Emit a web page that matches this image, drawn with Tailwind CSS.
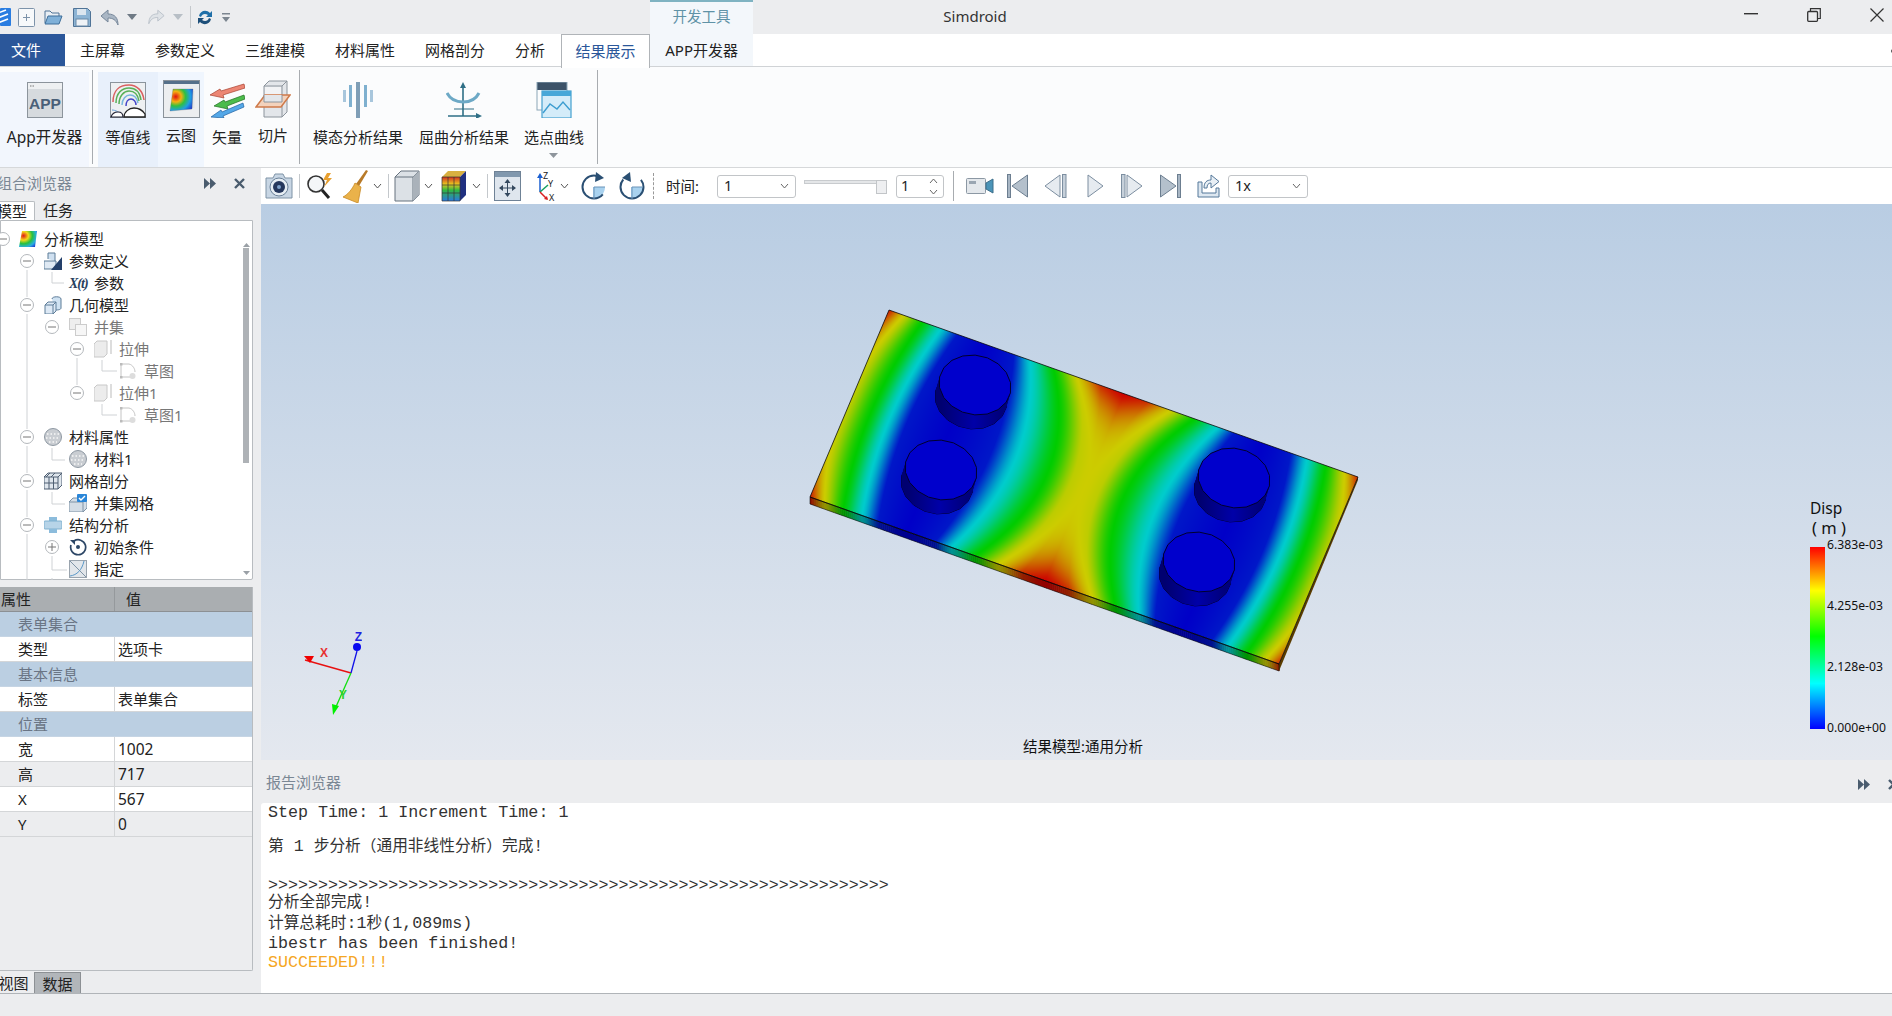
<!DOCTYPE html>
<html lang="zh">
<head>
<meta charset="utf-8">
<title>Simdroid</title>
<script src="https://cdn.jsdelivr.net/npm/@tailwindcss/browser@4"></script>
</head>
<body class="w-[1892px] h-[1016px] overflow-hidden bg-[#ecedef] text-[15px] text-[#222] font-['Noto_Sans','Noto_Sans_CJK_SC',sans-serif]">

<!-- title bar -->
<div class="relative h-[34px] flex items-center bg-[#ecedef]">
  <svg width="11" height="18" viewBox="0 0 11 18"><rect width="11" height="18" rx="1" fill="#2a7de1"/><path d="M-2 5 6 2M-2 10 8 6M-2 15 8 11" stroke="#fff" stroke-width="1.6"/></svg>
  <svg class="ml-[7px]" width="17" height="19" viewBox="0 0 17 19"><rect x=".5" y=".5" width="16" height="18" rx="1" fill="#f7f9fb" stroke="#7d93aa"/><path d="M5 9.5h7M8.5 6v7" stroke="#7d93aa"/></svg>
  <svg class="ml-[9px]" width="19" height="16" viewBox="0 0 19 16"><path d="M1 14V2h5l2 2h7v3" fill="#e8eef4" stroke="#4f7396"/><path d="M1 15 4 7h14l-3 8z" fill="#7fb0d8" stroke="#3f6f9a"/></svg>
  <svg class="ml-[10px]" width="18" height="19" viewBox="0 0 18 19"><path d="M.5.5h14l3 3v15H.5z" fill="#8db4d4" stroke="#4f7396"/><rect x="4" y="1" width="9" height="6" fill="#dce6ef"/><rect x="3" y="11" width="12" height="7" fill="#eef2f6" stroke="#6a8aa8"/></svg>
  <svg class="ml-[9px]" width="20" height="17" viewBox="0 0 20 17"><path d="M8 1 1 7l7 6V9c5 0 8 2 10 7 0-7-3-11-10-11z" fill="#a9b6c4" stroke="#76879a"/></svg>
  <svg class="ml-[7px]" width="10" height="6" viewBox="0 0 10 6"><path d="M0 0h10L5 6z" fill="#6f7a85"/></svg>
  <svg class="ml-[10px]" width="18" height="16" viewBox="0 0 20 17"><path d="M12 1l7 6-7 6V9C7 9 4 11 2 16 2 9 5 5 12 5z" fill="#dfe3e7" stroke="#b8c0c8"/></svg>
  <svg class="ml-[8px]" width="10" height="6" viewBox="0 0 10 6"><path d="M0 0h10L5 6z" fill="#b8bfc6"/></svg>
  <div class="ml-[7px] w-px h-[22px] bg-[#c4c8cc]"></div>
  <svg class="ml-[6px]" width="16" height="19" viewBox="0 0 16 19"><path d="M2 8C3 3 9 1 13 5l2-2v6H9l2-2C8 5 5 6 4 9z" fill="#1f6fa8"/><path d="M14 11c-1 5-7 7-11 3l-2 2v-6h6l-2 2c3 2 6 1 7-2z" fill="#1d4f7a"/></svg>
  <svg class="ml-[9px]" width="8" height="9" viewBox="0 0 8 9"><path d="M0 0h8v1.5H0z M0 4h8L4 9z" fill="#7c8690"/></svg>
  <div class="absolute left-[650px] top-0 w-[103px] h-[34px] pb-[2px] bg-[#f3f7fb] border-t-2 border-[#7fb3c2] flex items-center justify-center text-[#5f92a6] text-[14.5px]">开发工具</div>
  <div class="absolute left-[875px] top-[5px] w-[200px] text-center text-[15px] leading-[22px] text-[#333]">Simdroid</div>
  <svg class="absolute left-[1744px] top-[13px]" width="14" height="2"><rect width="14" height="1.4" fill="#333"/></svg>
  <svg class="absolute left-[1807px] top-[8px]" width="14" height="14" viewBox="0 0 14 14"><path d="M3.5 3V.7h9.8v9.8H11" fill="none" stroke="#333" stroke-width="1.2"/><rect x=".7" y="3.5" width="9.8" height="9.8" rx="1" fill="none" stroke="#333" stroke-width="1.3"/></svg>
  <svg class="absolute left-[1870px] top-[8px]" width="14" height="14" viewBox="0 0 14 14"><path d="M.5.5l13 13M13.5.5l-13 13" stroke="#333" stroke-width="1.2"/></svg>
</div>

<!-- ribbon tabs -->
<div class="relative h-[33px] flex items-center bg-white border-b border-[#d0d3d6] text-[15px]">
  <div class="w-[65px] h-full bg-[#2b579a] text-white flex items-center pl-[11px]">文件</div>
  <div class="px-[15px] whitespace-nowrap">主屏幕</div>
  <div class="px-[15px] whitespace-nowrap">参数定义</div>
  <div class="px-[15px] whitespace-nowrap">三维建模</div>
  <div class="px-[15px] whitespace-nowrap">材料属性</div>
  <div class="px-[15px] whitespace-nowrap">网格剖分</div>
  <div class="px-[15px] whitespace-nowrap">分析</div>
  <div class="ml-[1px] w-[89px] h-[34px] mt-px bg-white border border-b-0 border-[#b0b4b8] text-[#2b579a] flex items-center justify-center">结果展示</div>
  <div class="w-[103px] h-full bg-[#f3f7fb] flex items-center justify-center whitespace-nowrap">APP开发器</div>
  <div class="absolute right-[-3px] top-[15px] w-[4px] h-[4px] rounded-full bg-[#555]"></div>
</div>

<!-- ribbon -->
<div class="h-[101px] flex bg-[#fbfcfd] border-b border-[#d6d8da] text-[15px]">
  <div class="mt-[5px] w-[89px] pt-[10px] flex flex-col items-center bg-[#f2f6fd]">
    <svg width="36" height="36" viewBox="0 0 36 36"><rect x=".5" y=".5" width="35" height="35" fill="#d6dade" stroke="#8c949c"/><rect x="1" y="1" width="34" height="6" fill="#eef0f2"/><path d="M3 4h5" stroke="#777" stroke-dasharray="1.500 1"/><text x="18" y="27" text-anchor="middle" font-size="15.500" font-weight="700" fill="#4a6078" font-family="Liberation Sans">APP</text></svg>
    <div class="mt-[9px] whitespace-nowrap leading-[20px] text-[15.500px]">App开发器</div>
  </div>
  <div class="ml-[3px] mt-[3px] w-px h-[94px] bg-[#a8acb0]"></div>
  <div class="ml-[5px] mt-[5px] w-[60px] pt-[10px] flex flex-col items-center bg-[#e8f0fb]">
    <svg width="36" height="36" viewBox="0 0 36 36"><rect x=".5" y=".5" width="35" height="35" fill="#eef0f2" stroke="#8b949c"/><path d="M3 20C3 8 10 3 19 3c8 0 14 6 15 15" fill="none" stroke="#d96060" stroke-width="1.500"/><path d="M6 21C6 11 12 6 19 6c7 0 11 5 12 12M9 22c0-8 5-13 10-13 6 0 9 4 10 10" fill="none" stroke="#58b058" stroke-width="1.500"/><path d="M12 23c0-6 4-10 8-10 5 0 7 3 8 8" fill="none" stroke="#79b7dd" stroke-width="1.500"/><path d="M16 24c0-4 2-7 5-7 3 0 5 3 5 6" fill="none" stroke="#4444c8" stroke-width="1.500"/><path d="M2 28c3 0 8 2 10 6" fill="none" stroke="#6aa0d8"/><path d="M14 35c0-5 5-9 10-9 6 0 9 3 11 6v3z" fill="#fff" stroke="#222" stroke-width="1.300"/><path d="M1 35c1-3 3-5 7-5 3 0 5 2 5 5z" fill="#fff" stroke="#223" stroke-width="1.200"/></svg>
    <div class="mt-[9px] whitespace-nowrap leading-[20px]">等值线</div>
  </div>
  <div class="mt-[5px] w-[46px] pt-[8px] flex flex-col items-center bg-[#f0f6fe]">
    <svg width="37" height="38" viewBox="0 0 37 38"><defs><radialGradient id="h" cx=".25" cy=".35" r=".85"><stop offset="0" stop-color="#e01010"/><stop offset=".28" stop-color="#f5b010"/><stop offset=".5" stop-color="#30c040"/><stop offset=".75" stop-color="#20a0e0"/><stop offset="1" stop-color="#2040d0"/></radialGradient><linearGradient id="sh" x1="0" x2="1"><stop offset="0" stop-color="#a8acb0"/><stop offset="1" stop-color="#f0f1f2"/></linearGradient></defs><rect x=".5" y=".5" width="36" height="37" fill="#eceef0" stroke="#8a929a"/><rect x="1" y="1" width="35" height="3" fill="#55708a"/><path d="M27 11h6v17H18z" fill="url(#sh)"/><path d="M10 9 30 9 29 29 7 31z" fill="url(#h)" stroke="#666" stroke-width=".3"/></svg>
    <div class="mt-[7px] whitespace-nowrap leading-[20px]">云图</div>
  </div>
  <div class="w-[46px] pt-[15px] flex flex-col items-center">
    <svg width="36" height="36" viewBox="0 0 36 36"><path d="M1 13 11 7l1 2L35 2l1 4-22 7 1 3z" fill="#ec8674" stroke="#a8412f" stroke-width=".7"/><path d="M5 24l10-6 1 2 19-7 1 4-18 7 1 3z" fill="#4cbc4c" stroke="#1f6f1f" stroke-width=".7"/><path d="M2 35 12 28l1 2 21-9 1 4-21 9 1 2z" fill="#54a8e8" stroke="#1f60a0" stroke-width=".7"/></svg>
    <div class="mt-[9px] whitespace-nowrap leading-[20px]">矢量</div>
  </div>
  <div class="w-[46px] pt-[13px] flex flex-col items-center">
    <svg width="36" height="38" viewBox="0 0 36 38"><path d="M9 6l5-5h18v31l-5 5H9z" fill="#e3e6ea" stroke="#8c949c"/><path d="M9 6h18v31M27 6l5-5" fill="none" stroke="#8c949c"/><rect x="10" y="7" width="16" height="13" fill="#f2f3f5"/><path d="M1 27 10 15h25l-9 12z" fill="#f3d2bc" stroke="#cf7a4a" stroke-width="1.500"/><path d="M9 15v7h18V15" fill="#e3e6ea" stroke="#8c949c"/></svg>
    <div class="mt-[7px] whitespace-nowrap leading-[20px]">切片</div>
  </div>
  <div class="ml-[3px] mt-[3px] w-px h-[94px] bg-[#a8acb0]"></div>
  <div class="ml-[8px] w-[100px] pt-[15px] flex flex-col items-center">
    <svg width="32" height="36" viewBox="0 0 32 36"><path d="M14 0h4v36h-4z" fill="#7f9eb6"/><path d="M7 3h3v22H7zM22 3h3v22h-3z" fill="#7fb0cf"/><path d="M1 8h3v12H1zM28 8h3v12h-3z" fill="#a8c6dc"/></svg>
    <div class="mt-[9px] whitespace-nowrap leading-[20px]">模态分析结果</div>
  </div>
  <div class="w-[112px] pt-[15px] flex flex-col items-center">
    <svg width="36" height="36" viewBox="0 0 36 36"><path d="M17 2v32M2 34h32" stroke="#2f6f86" stroke-width="1.600" fill="none"/><path d="M17 0l-3 6h6zM36 34l-6-3v6z" fill="#2f6f86"/><path d="M1 11c3 6 9 9 16 9s13-3 16-9" fill="none" stroke="#6da9c6" stroke-width="3"/><path d="M8 27h20" stroke="#2f6f86"/></svg>
    <div class="mt-[9px] whitespace-nowrap leading-[20px]">屈曲分析结果</div>
  </div>
  <div class="w-[68px] pt-[15px] flex flex-col items-center relative">
    <svg width="36" height="36" viewBox="0 0 36 36"><rect x="1" y="0" width="30" height="8" fill="#3c5268"/><rect x="1" y="0" width="30" height="28" fill="none" stroke="#8ca6b8"/><rect x="6" y="9" width="29" height="27" fill="#d4ecf9" stroke="#43a0cf" stroke-width="1.200"/><rect x="6" y="9" width="29" height="5" fill="#47a7d8"/><path d="M7 31l7-9 7 5 6-7 7 8" fill="none" stroke="#3c9dd0" stroke-width="1.400"/></svg>
    <div class="mt-[9px] whitespace-nowrap leading-[20px]">选点曲线</div>
    <svg class="absolute top-[86px] left-[29px]" width="9" height="5"><path d="M0 0h9L4.500 5z" fill="#8e959c"/></svg>
  </div>
  <div class="ml-[9px] mt-[3px] w-px h-[94px] bg-[#a8acb0]"></div>
</div>

<!-- main -->
<div class="h-[826px] flex">
  <!-- left panel -->
  <div class="w-[261px] shrink-0 bg-[#ecedef]">
    <div class="relative h-[33px] flex items-center pb-[3px] text-[15px] text-[#7a8794]">
      <span class="ml-[-3px]">组合浏览器</span>
      <svg class="absolute left-[204px] top-[9px]" width="13" height="13" viewBox="0 0 13 13"><path d="M0 1l6 5.500-6 5.500zM6 1l6 5.500-6 5.500z" fill="#4a5c6e"/></svg>
      <svg class="absolute left-[234px] top-[10px]" width="11" height="11" viewBox="0 0 11 11"><path d="M1 1l9 9M10 1l-9 9" stroke="#4a5c6e" stroke-width="2.400"/></svg>
    </div>
    <div class="h-[19px] flex items-end">
      <div class="w-[35px] h-[19px] bg-white border-r border-t border-[#b8bcc0] rounded-tr-[2px] leading-[18px] whitespace-nowrap"><span class="ml-[-3px]">模型</span></div>
      <div class="ml-[8px] leading-[19px]">任务</div>
    </div>
    <div class="relative w-[253px] h-[360px] pt-[7px] bg-white border border-[#b8bcc0] rounded-br-[2px] text-[#222]">
      <svg class="absolute left-[-1px] top-[-1px] pointer-events-none" width="253" height="360" viewBox="0 220 253 360">
        <path d="M27 270v27M27 314v115M27 446v27M27 490v27M27 534v46M52 272v11h12M77 358v27M102 360v11h15M102 404v11h15M52 448v12h13M52 492v12h13M52 556v14h15M52 578v2" fill="none" stroke="#cfd2d5"/>
        <g fill="#fff" stroke="#b4b8bc"><circle cx="3" cy="239" r="6.500"/><circle cx="27" cy="261" r="6.500"/><circle cx="27" cy="305" r="6.500"/><circle cx="52" cy="327" r="6.500"/><circle cx="77" cy="349" r="6.500"/><circle cx="77" cy="393" r="6.500"/><circle cx="27" cy="437" r="6.500"/><circle cx="27" cy="481" r="6.500"/><circle cx="27" cy="525" r="6.500"/><circle cx="52" cy="547" r="6.500"/></g>
        <path d="M0 239h7M23 261h8M23 305h8M48 327h8M73 349h8M73 393h8M23 437h8M23 481h8M23 525h8M48 547h8M52 543v8" stroke="#777" fill="none"/>
        <path d="M243 247h7l-3.500-4zM243 571h7l-3.500 4z" fill="#9aa0a6"/>
        <rect x="243" y="248" width="6" height="215" fill="#aeb2b6"/>
      </svg>
      <div class="flex items-center h-[22px] pl-[18px]"><svg width="18" height="18" viewBox="0 0 18 18"><defs><radialGradient id="m" cx=".25" cy=".3" r=".9"><stop offset="0" stop-color="#e01818"/><stop offset=".3" stop-color="#f4d818"/><stop offset=".55" stop-color="#28c040"/><stop offset=".8" stop-color="#28b0e0"/><stop offset="1" stop-color="#2040d0"/></radialGradient></defs><path d="M3 1h15l-2 16H0z" fill="url(#m)"/></svg><span class="ml-[7px]">分析模型</span></div>
      <div class="flex items-center h-[22px] pl-[43px]"><svg width="18" height="18" viewBox="0 0 18 18"><path d="M4 7V1h7v8" fill="#cfe0f0" stroke="#5d7c98"/><path d="M0 17V9h12v8z" fill="#dfe9f3" stroke="#5d7c98"/><path d="M18 5v13H7z" fill="#24406a"/></svg><span class="ml-[7px]">参数定义</span></div>
      <div class="flex items-center h-[22px] pl-[68px]"><span class="w-[18px] text-[14px] italic font-['Liberation_Serif',serif] whitespace-nowrap tracking-[-1px] text-[#29415e] font-bold">X(t)</span><span class="ml-[7px]">参数</span></div>
      <div class="flex items-center h-[22px] pl-[43px]"><svg width="18" height="18" viewBox="0 0 18 18"><path d="M8 3c0-3 9-3 9 0v9c0 2-4 2-6 2" fill="#cfe2f2" stroke="#5d7c98"/><path d="M1 9l3-3h8v9l-3 3H1z" fill="#dde9f5" stroke="#5d7c98"/><path d="M1 9h8v9M9 9l3-3" fill="none" stroke="#5d7c98"/></svg><span class="ml-[7px]">几何模型</span></div>
      <div class="flex items-center h-[22px] pl-[68px] text-[#777]"><svg width="18" height="18" viewBox="0 0 18 18"><rect x=".5" y=".5" width="11" height="11" fill="#eee" stroke="#ccc"/><rect x="6.500" y="6.500" width="11" height="11" fill="#f6f6f6" stroke="#ccc"/></svg><span class="ml-[7px]">并集</span></div>
      <div class="flex items-center h-[22px] pl-[93px] text-[#777]"><svg width="18" height="18" viewBox="0 0 18 18"><path d="M0 4l3-3h10v13l-3 3H0z" fill="#ececec" stroke="#c8c8c8"/><path d="M17 0v14" stroke="#bbb"/></svg><span class="ml-[7px]">拉伸</span></div>
      <div class="flex items-center h-[22px] pl-[118px] text-[#777]"><svg width="18" height="18" viewBox="0 0 18 18"><path d="M2 2h8c4 1 6 5 6 8M2 2v13h9" fill="none" stroke="#c4c4c4"/><circle cx="13.500" cy="14" r="3" fill="#ddd"/><rect x="1" y="1" width="2.500" height="2.500" fill="#bbb"/><rect x="1" y="14" width="2.500" height="2.500" fill="#bbb"/></svg><span class="ml-[7px]">草图</span></div>
      <div class="flex items-center h-[22px] pl-[93px] text-[#777]"><svg width="18" height="18" viewBox="0 0 18 18"><path d="M0 4l3-3h10v13l-3 3H0z" fill="#ececec" stroke="#c8c8c8"/><path d="M17 0v14" stroke="#bbb"/></svg><span class="ml-[7px]">拉伸1</span></div>
      <div class="flex items-center h-[22px] pl-[118px] text-[#777]"><svg width="18" height="18" viewBox="0 0 18 18"><path d="M2 2h8c4 1 6 5 6 8M2 2v13h9" fill="none" stroke="#c4c4c4"/><circle cx="13.500" cy="14" r="3" fill="#ddd"/><rect x="1" y="1" width="2.500" height="2.500" fill="#bbb"/><rect x="1" y="14" width="2.500" height="2.500" fill="#bbb"/></svg><span class="ml-[7px]">草图1</span></div>
      <div class="flex items-center h-[22px] pl-[43px]"><svg width="18" height="18" viewBox="0 0 18 18"><circle cx="9" cy="9" r="8.500" fill="#c9cdd2" stroke="#8e98a2"/><path d="M3 6h12M2 10h14M5 14h8" stroke="#f8f8f8" stroke-width="1.400" stroke-dasharray="1.500 2"/></svg><span class="ml-[7px]">材料属性</span></div>
      <div class="flex items-center h-[22px] pl-[68px]"><svg width="18" height="18" viewBox="0 0 18 18"><circle cx="9" cy="9" r="8.500" fill="#c9cdd2" stroke="#8e98a2"/><path d="M3 6h12M2 10h14M5 14h8" stroke="#f8f8f8" stroke-width="1.400" stroke-dasharray="1.500 2"/></svg><span class="ml-[7px]">材料1</span></div>
      <div class="flex items-center h-[22px] pl-[43px]"><svg width="18" height="18" viewBox="0 0 18 18"><path d="M0 5l4-4h14v12l-4 4H0z" fill="#dfe6ed" stroke="#4f5f72"/><path d="M0 5h14v12M14 5l4-4M5 5v12M9.500 5v12M0 11h14M6 1 2 5M11 1 7 5" fill="none" stroke="#4f5f72"/></svg><span class="ml-[7px]">网格剖分</span></div>
      <div class="flex items-center h-[22px] pl-[68px]"><svg width="18" height="18" viewBox="0 0 18 18"><path d="M0 8l4-4h14v10l-4 4H0z" fill="#d4dde6" stroke="#7f93a6"/><path d="M0 8h14v10M14 8l4-4" fill="none" stroke="#7f93a6"/><rect x="8" y="0" width="10" height="8" rx="1" fill="#2a86d8"/><path d="M10 4l2 2 4-4" fill="none" stroke="#fff" stroke-width="1.400"/></svg><span class="ml-[7px]">并集网格</span></div>
      <div class="flex items-center h-[22px] pl-[43px]"><svg width="18" height="18" viewBox="0 0 18 18"><rect x="5" y="1" width="8" height="4" fill="#8cbcdc"/><rect x="0" y="5" width="18" height="8" rx="1" fill="#b7d4e8" stroke="#7fb0cf"/><rect x="5" y="13" width="8" height="4" fill="#8cbcdc"/></svg><span class="ml-[7px]">结构分析</span></div>
      <div class="flex items-center h-[22px] pl-[68px]"><svg width="18" height="18" viewBox="0 0 18 18"><path d="M5 3a7.500 7.500 0 1 1-3 4" fill="none" stroke="#2d4766" stroke-width="1.700"/><path d="M1 2h5v5z" fill="#2d4766"/><circle cx="9" cy="9" r="2" fill="#2d4766"/></svg><span class="ml-[7px]">初始条件</span></div>
      <div class="flex items-center h-[22px] pl-[68px]"><svg width="18" height="18" viewBox="0 0 18 18"><rect x=".5" y=".5" width="17" height="17" fill="#e2e6ea" stroke="#9aa4ae"/><path d="M1 1l16 16" stroke="#7f93a6"/><path d="M1 16C8 15 13 10 15 1" fill="none" stroke="#5a98c8"/></svg><span class="ml-[7px]">指定</span></div>
    </div>
    <div class="mt-[7px] w-[253px] h-[384px] border-r border-b border-[#b8bcc0] rounded-br-[2px]">
      <div class="h-[25px] flex bg-[#aaaeb1] border-b border-[#8c9094] leading-[24px]"><div class="w-[115px] border-r border-[#95999c] pl-[1px]">属性</div><div class="pl-[11px]">值</div></div>
      <div class="h-[25px] bg-[#bbcfe2] pl-[18px] leading-[24px] text-[#6a7585] border-b border-[#c6d5e4]">表单集合</div>
      <div class="h-[25px] flex bg-white border-b border-[#d4d6d8] leading-[24px]"><div class="w-[115px] pl-[18px] border-r border-[#d4d6d8]">类型</div><div class="pl-[3px]">选项卡</div></div>
      <div class="h-[25px] bg-[#bbcfe2] pl-[18px] leading-[24px] text-[#6a7585] border-b border-[#c6d5e4]">基本信息</div>
      <div class="h-[25px] flex bg-white border-b border-[#d4d6d8] leading-[24px]"><div class="w-[115px] pl-[18px] border-r border-[#d4d6d8]">标签</div><div class="pl-[3px]">表单集合</div></div>
      <div class="h-[25px] bg-[#bbcfe2] pl-[18px] leading-[24px] text-[#6a7585] border-b border-[#c6d5e4]">位置</div>
      <div class="h-[25px] flex bg-white border-b border-[#d4d6d8] leading-[24px]"><div class="w-[115px] pl-[18px] border-r border-[#d4d6d8]">宽</div><div class="pl-[3px] text-[15.500px]">1002</div></div>
      <div class="h-[25px] flex bg-[#ecedef] border-b border-[#d4d6d8] leading-[24px]"><div class="w-[115px] pl-[18px] border-r border-[#d4d6d8]">高</div><div class="pl-[3px] text-[15.500px]">717</div></div>
      <div class="h-[25px] flex bg-white border-b border-[#d4d6d8] leading-[24px]"><div class="w-[115px] pl-[18px] border-r border-[#d4d6d8]">X</div><div class="pl-[3px] text-[15.500px]">567</div></div>
      <div class="h-[25px] flex bg-[#ecedef] border-b border-[#d4d6d8] leading-[24px]"><div class="w-[115px] pl-[18px] border-r border-[#d4d6d8]">Y</div><div class="pl-[3px] text-[15.500px]">0</div></div>
    </div>
    <div class="h-[23px] flex items-end border-b border-[#b0b4b8]">
      <div class="ml-[-7px] w-[41px] leading-[25px] h-[22px] text-center">视图</div>
      <div class="w-[47px] h-[21px] bg-[#b2b6ba] border border-b-0 border-[#8c9094] leading-[23px] text-center">数据</div>
    </div>
  </div>

  <!-- right column -->
  <div class="flex-1 min-w-0 flex flex-col">
    <!-- toolbar -->
    <div class="h-[36px] flex items-center bg-white text-[14.5px]">
      <svg class="ml-[4px]" width="28" height="26" viewBox="0 0 28 26"><path d="M1 5h7l2-4h8l2 4h7v20H1z" fill="#c8d6e4" stroke="#7f93a6"/><circle cx="14" cy="14" r="9" fill="#e6edf3" stroke="#6a8098"/><circle cx="14" cy="14" r="6" fill="#25375c"/><circle cx="14" cy="14" r="2" fill="#7ea0c8"/></svg>
      <div class="ml-[6px] w-px h-[24px] bg-[#c4c8cc]"></div>
      <svg class="ml-[6px]" width="27" height="26" viewBox="0 0 27 26"><circle cx="10" cy="11" r="8" fill="#f4f6f8" stroke="#333" stroke-width="1.600"/><path d="M16 17l7 8" stroke="#222" stroke-width="3"/><path d="M21 0l-4 7h4l-3 7 8-9h-4l3-5z" fill="#e8a030"/></svg>
      <svg class="ml-[10px]" width="25" height="33" viewBox="0 0 25 33"><path d="M23 0l2 1-9 15-3-2z" fill="#b87a28"/><path d="M12 13l6 4-3 16-15-6c4-2 9-7 12-14z" fill="#eab24a" stroke="#c98a24" stroke-width=".8"/></svg>
      <svg class="ml-[5px]" width="9" height="6" viewBox="0 0 9 6"><path d="M1 1l3.500 4L8 1" fill="none" stroke="#555"/></svg>
      <div class="ml-[6px] w-px h-[24px] bg-[#c4c8cc]"></div>
      <svg class="ml-[5px]" width="26" height="32" viewBox="0 0 26 32"><path d="M1 7l6-6h18v24l-6 6H1z" fill="#dce1e6" stroke="#66727e"/><path d="M1 7h18v24M19 7l6-6" fill="none" stroke="#66727e"/><path d="M19 7l6-6v24l-6 6z" fill="#aab2ba"/></svg>
      <svg class="ml-[4px]" width="9" height="6" viewBox="0 0 9 6"><path d="M1 1l3.500 4L8 1" fill="none" stroke="#555"/></svg>
      <svg class="ml-[8px]" width="26" height="32" viewBox="0 0 26 32"><defs><linearGradient id="g" x1="0" y1="0" x2="0" y2="1"><stop offset="0" stop-color="#d23020"/><stop offset=".3" stop-color="#e8c820"/><stop offset=".55" stop-color="#30b840"/><stop offset="1" stop-color="#2878e0"/></linearGradient></defs><path d="M1 7l6-6h18L19 7z" fill="#d8b040"/><rect x="1" y="7" width="18" height="24" fill="url(#g)"/><path d="M19 7l6-6v24l-6 6z" fill="#203080"/><path d="M1 7h18v24H1zM7 7v24M13 7v24M1 15h18M1 23h18" fill="none" stroke="#333" stroke-width=".7"/></svg>
      <svg class="ml-[5px]" width="9" height="6" viewBox="0 0 9 6"><path d="M1 1l3.500 4L8 1" fill="none" stroke="#555"/></svg>
      <div class="ml-[6px] w-px h-[24px] bg-[#c4c8cc]"></div>
      <svg class="ml-[6px]" width="27" height="30" viewBox="0 0 27 30"><rect x=".5" y=".5" width="26" height="29" fill="#dfe6ee" stroke="#6f8296"/><rect x="1" y="1" width="25" height="5" fill="#8198ae"/><path d="M13.500 9v16M6 17h15" stroke="#34485e"/><path d="M13.500 8l-3 4h6zM13.500 26l-3-4h6zM5 17l4-3v6zM22 17l-4-3v6z" fill="#34485e"/></svg>
      <svg class="ml-[13px]" width="22" height="32" viewBox="0 0 22 32"><path d="M6 22V7" stroke="#1b5fd0" stroke-width="1.500"/><path d="M6 3l-3 5h6z" fill="#1b5fd0"/><path d="M6 22l8-7" stroke="#15a060" stroke-width="1.500"/><path d="M6 22l7 7" stroke="#d92020" stroke-width="1.500"/><path d="M14 30l-4-1 3-3z" fill="#d92020"/><text x="9" y="9" font-size="9" fill="#222" font-family="Noto Sans">Z</text><text x="14" y="17" font-size="9" fill="#222" font-family="Noto Sans">Y</text><text x="15" y="31" font-size="9" fill="#222" font-family="Noto Sans">X</text></svg>
      <svg class="ml-[4px]" width="9" height="6" viewBox="0 0 9 6"><path d="M1 1l3.500 4L8 1" fill="none" stroke="#555"/></svg>
      <svg class="ml-[12px]" width="26" height="28" viewBox="0 0 26 28"><path d="M13 15h-1V27h1A12 12 0 0 0 24 15z" fill="#a9d2ef"/><circle cx="13" cy="15" r="11.500" fill="none" stroke="#2a4f73" stroke-width="2" stroke-dasharray="54 20" stroke-dashoffset="-8"/><path d="M13 15h11M13 15v12" stroke="#6a93b8"/><path d="M15 0l8 6-9 4z" fill="#2a4f73"/></svg>
      <svg class="ml-[12px]" width="26" height="28" viewBox="0 0 26 28"><path d="M13 15h1V27h-1A12 12 0 0 1 2 15z" fill="#a9d2ef" transform="matrix(-1 0 0 1 26 0)"/><circle cx="13" cy="15" r="11.500" fill="none" stroke="#2a4f73" stroke-width="2" stroke-dasharray="54 20" stroke-dashoffset="10"/><path d="M13 15h11M13 15v12" stroke="#6a93b8"/><path d="M11 0 3 6l9 4z" fill="#2a4f73"/></svg>
      <div class="ml-[8px] h-[26px] border-l border-dashed border-[#999]"></div>
      <div class="ml-[12px] w-[33px] whitespace-nowrap pt-[2px]">时间:</div>
      <div class="ml-[18px] w-[79px] h-[23px] bg-white border border-[#c2c5c8] rounded-[3px] flex items-center justify-between px-[6px]"><span>1</span><svg width="9" height="6" viewBox="0 0 9 6"><path d="M1 1l3.500 4L8 1" fill="none" stroke="#666"/></svg></div>
      <div class="ml-[8px] w-[83px] h-[23px] relative"><div class="absolute left-0 right-[10px] top-[5px] h-[4px] bg-[#e4e6e8] border border-[#c8cbce]"></div><div class="absolute right-0 top-[5px] w-[11px] h-[14px] bg-[#eeeff1] border border-[#c2c5c8]"></div></div>
      <div class="ml-[9px] w-[48px] h-[23px] bg-white border border-[#c2c5c8] rounded-[3px] flex items-center justify-between pl-[4px] pr-[5px]"><span>1</span><svg width="9" height="17" viewBox="0 0 9 17"><path d="M1 5l3.500-4L8 5M1 12l3.500 4L8 12" fill="none" stroke="#666"/></svg></div>
      <div class="ml-[9px] w-px h-[30px] bg-[#a8acb0]"></div>
      <svg class="ml-[12px]" width="28" height="18" viewBox="0 0 28 18"><rect x=".5" y="1.500" width="19" height="15" rx="1" fill="#e4e8ec" stroke="#8c98a4"/><rect x="3" y="4" width="7" height="3" fill="#9aa6b2"/><path d="M20 6l7-4v14l-7-4z" fill="#4b94b8" stroke="#3c6e8a"/></svg>
      <svg class="ml-[13px]" width="21" height="24" viewBox="0 0 21 24"><rect x=".5" y=".5" width="3" height="23" fill="#a8b6c4" stroke="#6c7e90"/><path d="M20.500 1v22L5 12z" fill="#b4c0cc" stroke="#6c7e90"/></svg>
      <svg class="ml-[16px]" width="23" height="24" viewBox="0 0 23 24"><path d="M16 1v22L1 12z" fill="#e6ebf0" stroke="#7c8ea0"/><rect x="18.500" y=".5" width="3.500" height="23" fill="#c6d0da" stroke="#7c8ea0"/></svg>
      <svg class="ml-[20px]" width="17" height="24" viewBox="0 0 17 24"><path d="M1 1v22l15-11z" fill="#e6ebf0" stroke="#7c8ea0"/></svg>
      <svg class="ml-[17px]" width="22" height="24" viewBox="0 0 22 24"><rect x=".5" y=".5" width="3.500" height="23" fill="#c6d0da" stroke="#7c8ea0"/><path d="M6 1v22l15-11z" fill="#e6ebf0" stroke="#7c8ea0"/></svg>
      <svg class="ml-[17px]" width="21" height="24" viewBox="0 0 21 24"><path d="M.5 1v22L16 12z" fill="#b4c0cc" stroke="#6c7e90"/><rect x="17.500" y=".5" width="3" height="23" fill="#a8b6c4" stroke="#6c7e90"/></svg>
      <svg class="ml-[16px]" width="23" height="24" viewBox="0 0 23 24"><path d="M1 8h4v11h14v-5h3v9H1z" fill="#dde7f0" stroke="#54789a"/><path d="M7 14c0-6 3-8 7-8V1l8 6.500-8 6.500V9c-3 0-4 2-4 5z" fill="#e8eff5" stroke="#54789a"/></svg>
      <div class="ml-[8px] w-[80px] h-[23px] bg-white border border-[#c2c5c8] rounded-[3px] flex items-center justify-between px-[6px]"><span>1x</span><svg width="9" height="6" viewBox="0 0 9 6"><path d="M1 1l3.500 4L8 1" fill="none" stroke="#666"/></svg></div>
    </div>

    <!-- viewport -->
    <div class="relative h-[556px] bg-[linear-gradient(to_bottom,#b9cde3,#e4e8ef)] overflow-hidden">
      <canvas id="plate" width="570" height="380" class="absolute left-[539px] top-[96px]"></canvas>

      <svg class="absolute left-[21px] top-[420px]" width="80" height="100" viewBox="0 0 80 100">
        <path d="M69 49 23 36" stroke="#e81010" stroke-width="1.300"/><path d="M23 32h10l-4 7z" fill="#f00000" transform="translate(-1 0)"/>
        <path d="M69 49 75 27" stroke="#1010e8" stroke-width="1.300"/><circle cx="75" cy="23" r="4" fill="#0808f0"/>
        <path d="M69 49 53 85" stroke="#10e010" stroke-width="1.300"/><path d="M50 80l7 2-6 9z" fill="#00f000"/>
        <text x="38" y="33" font-size="12" font-weight="700" fill="#e83030" font-family="Liberation Sans">X</text>
        <text x="80" y="17" font-size="12" font-weight="700" fill="#2020e0" font-family="Liberation Sans" text-anchor="end">Z</text>
        <text x="57" y="75" font-size="12" font-weight="700" fill="#30d030" font-family="Liberation Sans">Y</text>
      </svg>

      <div class="absolute left-[1549px] top-[294px] text-[15.5px] leading-[20px] text-[#111]">Disp<br><span class="ml-[2px] text-[16.500px]">( m )</span></div>
      <div class="absolute left-[1549px] top-[343px] w-[15px] h-[182px] bg-[linear-gradient(to_bottom,#f00,#ff0_24%,#0f0_49%,#0ff_75%,#00f)]"></div>
      <div class="absolute left-[1566px] top-[334px] text-[12.2px] leading-[14px] text-[#111]">6.383e-03</div>
      <div class="absolute left-[1566px] top-[395px] text-[12.2px] leading-[14px] text-[#111]">4.255e-03</div>
      <div class="absolute left-[1566px] top-[456px] text-[12.2px] leading-[14px] text-[#111]">2.128e-03</div>
      <div class="absolute left-[1566px] top-[517px] text-[12.2px] leading-[14px] text-[#111]">0.000e+00</div>
      <div class="absolute left-[722px] top-[532px] w-[200px] text-center text-[14.5px] leading-[20px] text-[#111]">结果模型:通用分析</div>
    </div>

    <!-- report -->
    <div class="relative h-[43px] flex items-center pl-[5px] pt-[2px] text-[15px] text-[#7a8794]">
      报告浏览器
      <svg class="absolute left-[1597px] top-[18px]" width="13" height="13" viewBox="0 0 13 13"><path d="M0 1l6 5.500-6 5.500zM6 1l6 5.500-6 5.500z" fill="#4a5c6e"/></svg>
      <svg class="absolute left-[1627px] top-[19px]" width="11" height="11" viewBox="0 0 11 11"><path d="M1 1l9 9M10 1l-9 9" stroke="#4a5c6e" stroke-width="2.400"/></svg>
    </div>
    <div class="h-[191px] bg-white border-b border-[#b0b4b8] rounded-tl-[3px] pl-[7px] pt-[1px] font-['Liberation_Mono','Noto_Sans_CJK_SC',monospace] text-[#333] whitespace-nowrap text-[15.7px]">
      <div class="h-[18px] leading-[18px] text-[16.7px]">Step Time: 1 Increment Time: 1</div>
      <div class="mt-[15px] h-[20px] leading-[20px]">第<span class="text-[16.7px]"> 1 </span>步分析（通用非线性分析）完成<span class="text-[16.7px]">!</span></div>
      <div class="mt-[20px] h-[16px] leading-[18px] text-[16.7px]">&gt;&gt;&gt;&gt;&gt;&gt;&gt;&gt;&gt;&gt;&gt;&gt;&gt;&gt;&gt;&gt;&gt;&gt;&gt;&gt;&gt;&gt;&gt;&gt;&gt;&gt;&gt;&gt;&gt;&gt;&gt;&gt;&gt;&gt;&gt;&gt;&gt;&gt;&gt;&gt;&gt;&gt;&gt;&gt;&gt;&gt;&gt;&gt;&gt;&gt;&gt;&gt;&gt;&gt;&gt;&gt;&gt;&gt;&gt;&gt;&gt;&gt;</div>
      <div class="h-[21px] leading-[19px]">分析全部完成<span class="text-[16.7px]">!</span></div>
      <div class="h-[20px] leading-[20px]">计算总耗时<span class="text-[16.7px]">:1</span>秒<span class="text-[16.7px]">(1,089ms)</span></div>
      <div class="h-[19px] leading-[19px] text-[16.7px]">ibestr has been finished!</div>
      <div class="h-[20px] leading-[20px] text-[16.7px] text-[#f5a623]">SUCCEEDED!!!</div>
    </div>
  </div>
</div>
<div class="h-[22px] bg-[#ecedef]"></div>

<script>
(function(){
  var c=document.getElementById('plate'),x=c.getContext('2d'),ox=800,oy=300;
  var A=[889,310],AB=[469,167],AD=[-79,187],det=AB[0]*AD[1]-AD[0]*AB[1];
  var mid=[[0,.72],[.02,.62],[.045,.5],[.085,.25],[.12,.04],[.205,0],[.30,.04],[.35,.25],[.42,.5],[.47,.72],[.49,.745],[.5,.75]];
  var edg=[[0,.95],[.03,.75],[.07,.5],[.11,.25],[.145,.04],[.205,0],[.265,.04],[.30,.25],[.35,.5],[.40,.75],[.45,.93],[.5,1]];
  function field(u,v){
    var U=u<.5?u:1-u;if(U<0)U=0;
    var s=Math.pow(Math.abs(2*v-1),2);if(s>1)s=1;
    var ts=Math.pow(s,1.5);
    var pu=mid[0][0]*(1-s)+edg[0][0]*s,pt=mid[0][1]*(1-ts)+edg[0][1]*ts;
    for(var i=1;i<mid.length;i++){
      var qu=mid[i][0]*(1-s)+edg[i][0]*s,qt=mid[i][1]*(1-ts)+edg[i][1]*ts;
      if(U<=qu){return pt+(qt-pt)*(U-pu)/(qu-pu||1);}
      pu=qu;pt=qt;
    }
    return pt;
  }
  function col(t){
    var st=[[0,0,200],[0,204,204],[0,204,0],[204,204,0],[204,0,0]];
    t=Math.max(0,Math.min(1,t))*4;var i=Math.min(3,Math.floor(t)),f=t-i;
    f=.5*f+.5*f*f*(3-2*f);
    return [0,1,2].map(function(k){return st[i][k]+(st[i+1][k]-st[i][k])*f;});
  }
  var W=c.width,H=c.height,off=document.createElement('canvas');off.width=W;off.height=H;
  var oc=off.getContext('2d'),im=oc.createImageData(W,H),d=im.data;
  for(var py=0;py<H;py++)for(var px=0;px<W;px++){
    var rx=px+ox-A[0],ry=py+oy-A[1];
    var u=(rx*AD[1]-AD[0]*ry)/det,v=(AB[0]*ry-AB[1]*rx)/det;
    if(u<-.01||u>1.01||v<-.02||v>1.02)continue;
    var cc=col(field(u,v)),p=(py*W+px)*4;
    d[p]=cc[0];d[p+1]=cc[1];d[p+2]=cc[2];d[p+3]=255;
  }
  oc.putImageData(im,0,0);
  function P(u,v,dy){return [A[0]+AB[0]*u+AD[0]*v-ox,A[1]+AB[1]*u+AD[1]*v-oy+(dy||0)];}
  function poly(a){x.beginPath();a.forEach(function(q,i){i?x.lineTo(q[0],q[1]):x.moveTo(q[0],q[1]);});x.closePath();}
  var T=7,n=240,i;
  for(i=0;i<n;i++){
    var u0=i/n,u1=(i+1.3)/n,k=col(field(u0,1));
    x.fillStyle='rgb('+(k[0]*.72|0)+','+(k[1]*.72|0)+','+(k[2]*.72|0)+')';
    poly([P(u0,1),P(u1,1),P(u1,1,T),P(u0,1,T)]);x.fill();
  }
  x.fillStyle='#5a3c00';poly([P(1,0),P(1,0,3),P(1,1,T),P(1,1)]);x.fill();
  x.save();poly([P(0,0),P(1,0),P(1,1),P(0,1)]);x.clip();x.drawImage(off,0,0);x.restore();
  x.lineWidth=1;x.strokeStyle='rgba(0,0,0,.75)';
  poly([P(0,0),P(1,0),P(1,1),P(0,1)]);x.stroke();
  poly([P(0,1),P(1,1),P(1,1,T),P(0,1,T)]);x.strokeStyle='rgba(0,0,0,.55)';x.stroke();
  var ru=[36.2*469/498,36.2*167/498],rv=[29.8*-79/203,29.8*187/203];
  function ell(cx,cy){var a=[];for(var j=0;j<18;j++){var th=j/18*Math.PI*2+.2;a.push([cx-ox+Math.cos(th)*ru[0]+Math.sin(th)*rv[0],cy-oy+Math.cos(th)*ru[1]+Math.sin(th)*rv[1]]);}return a;}
  [[975,385],[941,470],[1234,478],[1199,562]].forEach(function(ce){
    var bx=ce[0]-4,by=ce[1]+14;
    x.fillStyle='#00008c';poly(ell(bx,by));x.fill();
    x.strokeStyle='#00002e';poly(ell(bx,by));x.stroke();
    var g=x.createLinearGradient(bx-ox-30,0,bx-ox+30,0);g.addColorStop(0,'#000070');g.addColorStop(.55,'#0000a8');g.addColorStop(1,'#00007a');
    x.fillStyle=g;
    for(var s=0;s<14;s++){var f=s/14;poly(ell(bx+4*f,by-14*f));x.fill();}
    x.fillStyle='#0000cc';poly(ell(ce[0],ce[1]));x.fill();
    x.strokeStyle='#00002e';x.stroke();
  });
})();
</script>
</body>
</html>
